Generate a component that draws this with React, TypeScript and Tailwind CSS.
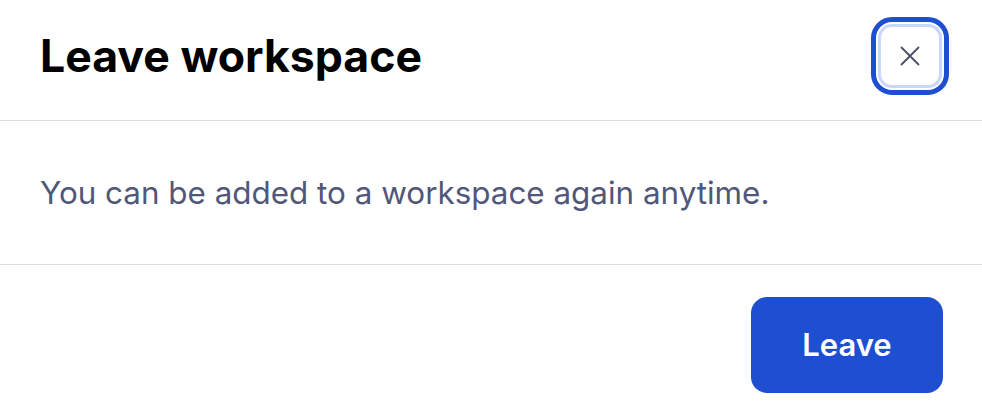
export default function App() {
  return (
    <div className="w-[982px] h-[414px] overflow-hidden bg-white font-['Inter','Liberation_Sans',sans-serif]">
      {/* Header */}
      <div className="flex items-center justify-between pl-10 pr-10 pt-6 pb-8 border-b border-[#dcdde5]">
        <h2 className="text-[44.6px] leading-[56px] font-bold text-black">Leave workspace</h2>
        <button className="w-16 h-16 flex items-center justify-center rounded-[14px] border-[3px] border-[#c9d8f8] bg-white outline-[5px] outline-solid outline-[#1f4fd1] outline-offset-[2px]">
          <svg width="24" height="24" viewBox="0 0 24 24" fill="none" stroke="#4b5060" strokeWidth="1.8" strokeLinecap="round">
            <path d="M3.5 3.5l17 17M20.5 3.5l-17 17" />
          </svg>
        </button>
      </div>

      {/* Body */}
      <div className="h-[144px] flex items-center px-10 border-b border-[#dcdde5]">
        <p className="text-[31.4px] leading-[40px] text-[#50577a]">You can be added to a workspace again anytime.</p>
      </div>

      {/* Footer */}
      <div className="flex justify-end pl-10 pr-[39px] pt-8">
        <button className="w-[192px] h-[96px] rounded-[16px] bg-[#1f4fd1] text-white text-[31px] font-semibold">
          Leave
        </button>
      </div>
    </div>
  );
}
